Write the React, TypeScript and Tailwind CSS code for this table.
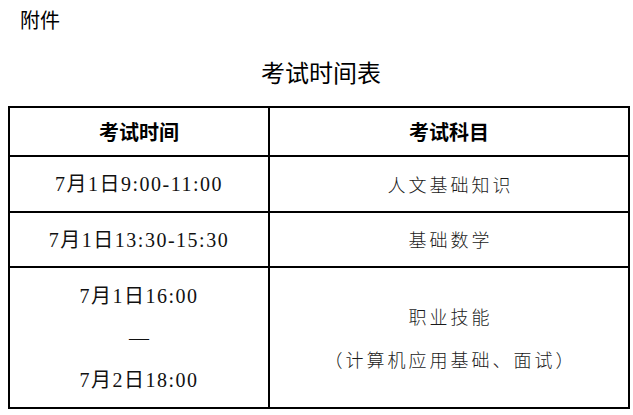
import React from "react";

const cjk = { fontFamily: '"Noto Sans CJK SC", "Noto Sans", sans-serif' };
const serif = { fontFamily: '"Liberation Serif", "Noto Sans CJK SC", serif' };

function DateText({ children }: { children: React.ReactNode }) {
  return (
    <div className="text-[20px] tracking-[1.5px] text-[#111]" style={serif}>
      {children}
    </div>
  );
}

function SubjText({ children }: { children: React.ReactNode }) {
  return (
    <div className="text-[18px] tracking-[3px] font-light text-[#1a1a1a]" style={cjk}>
      {children}
    </div>
  );
}

export default function App() {
  return (
    <div className="w-[633px] h-[415px] bg-white text-black overflow-hidden" style={cjk}>
      <div className="pl-[20px] pt-[8px] text-[20px] leading-[24px]">附件</div>
      <div className="mt-[24px] pl-[9px] text-center text-[24px] leading-[32px]">考试时间表</div>
      <div className="mt-[18px] ml-[8px] w-[622px] border-2 border-black flex flex-col">
        <div className="flex h-[47px]">
          <div className="w-[260px] border-r-2 border-black flex items-center justify-center text-[20px] font-bold">
            考试时间
          </div>
          <div className="flex-1 flex items-center justify-center text-[20px] font-bold">考试科目</div>
        </div>
        <div className="flex h-[56px] border-t-2 border-black">
          <div className="w-[260px] border-r-2 border-black flex items-center justify-center">
            <DateText>7月1日9:00-11:00</DateText>
          </div>
          <div className="flex-1 flex items-center justify-center pl-[3px]">
            <SubjText>人文基础知识</SubjText>
          </div>
        </div>
        <div className="flex h-[55px] border-t-2 border-black">
          <div className="w-[260px] border-r-2 border-black flex items-center justify-center">
            <DateText>7月1日13:30-15:30</DateText>
          </div>
          <div className="flex-1 flex items-center justify-center pl-[3px]">
            <SubjText>基础数学</SubjText>
          </div>
        </div>
        <div className="flex h-[141px] border-t-2 border-black">
          <div className="w-[260px] border-r-2 border-black flex flex-col items-center justify-center">
            <div className="leading-[42px]"><DateText>7月1日16:00</DateText></div>
            <div className="leading-[42px] text-[20px] text-[#111]" style={serif}>—</div>
            <div className="leading-[42px]"><DateText>7月2日18:00</DateText></div>
          </div>
          <div className="flex-1 flex flex-col items-center justify-center pl-[3px]">
            <div className="leading-[43px]"><SubjText>职业技能</SubjText></div>
            <div className="leading-[43px]"><SubjText>（计算机应用基础、面试）</SubjText></div>
          </div>
        </div>
      </div>
    </div>
  );
}
